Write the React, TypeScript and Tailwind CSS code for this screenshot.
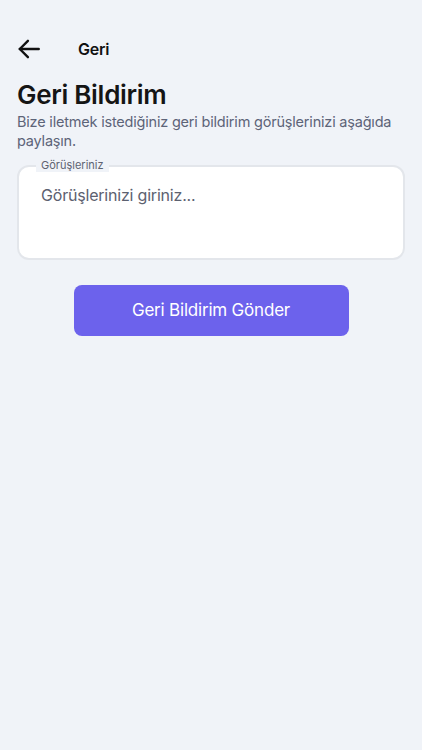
import { useState } from "react";

const FONT = { fontFamily: "Inter, 'Noto Sans', sans-serif" };

function BackArrow() {
  return (
    <svg viewBox="0 0 24 24" className="w-[26px] h-[26px]" fill="none" stroke="#111" strokeWidth={2.2} strokeLinecap="round" strokeLinejoin="round">
      <path d="M21 12H3.5" />
      <path d="M11 4.5L3.5 12l7.5 7.5" />
    </svg>
  );
}

export default function App() {
  const [text, setText] = useState("");

  return (
    <div className="min-h-[750px] w-full bg-[#f0f3f8] pt-[37px]" style={FONT}>
      <div className="flex items-center h-[24px] px-[16px]">
        <button className="w-[28px] flex items-center">
          <BackArrow />
        </button>
        <span className="ml-[34px] text-[16px] font-semibold text-[#111] tracking-[-0.2px]">Geri</span>
      </div>

      <div className="px-[17px] pt-[18px]">
        <h1 className="text-[26px] leading-[32px] font-semibold text-[#151515] tracking-[-0.3px]">Geri Bildirim</h1>
        <p className="mt-[1px] text-[14.5px] leading-[19px] text-[#5d6478] tracking-[-0.2px]">
          Bize iletmek istediğiniz geri bildirim görüşlerinizi aşağıda paylaşın.
        </p>

        <div className="relative mt-[15px]">
          <span className="absolute left-[19px] -top-[7px] px-[5px] text-[11px] leading-[14px] text-[#5e6372] bg-[#f0f3f8]">
            Görüşleriniz
          </span>
          <textarea
            value={text}
            onChange={(e) => setText(e.target.value)}
            placeholder="Görüşlerinizi giriniz..."
            className="block w-full h-[95px] resize-none rounded-[12px] border-2 border-[#e3e6eb] bg-white px-[22px] pt-[17px] text-[16px] leading-[22px] text-[#333] placeholder:text-[#5c6170] outline-none tracking-[-0.2px]"
          />
        </div>

        <div className="flex justify-center mt-[25px]">
          <button className="w-[275px] h-[51px] rounded-[8px] bg-[#6c62ec] text-white text-[17px] tracking-[-0.2px]">
            Geri Bildirim Gönder
          </button>
        </div>
      </div>
    </div>
  );
}
